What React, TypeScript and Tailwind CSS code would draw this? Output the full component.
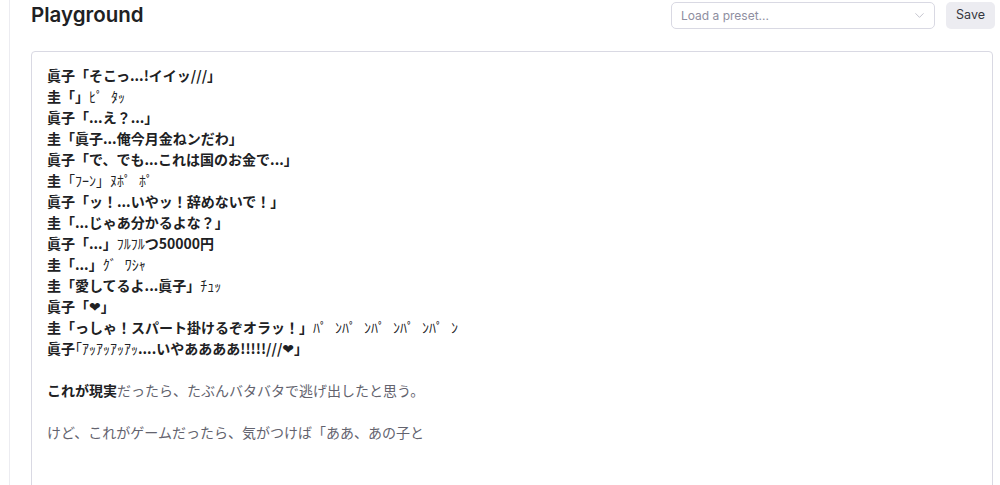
import { ChevronDown } from 'lucide-react'

type Seg = { t: string; thin?: boolean }

const lines: Seg[][] = [
  [{ t: '眞子「そこっ...!イイッ///」' }],
  [{ t: '圭「」' }, { t: 'ﾋﾟﾀｯ', thin: true }],
  [{ t: '眞子「...え？...」' }],
  [{ t: '圭「眞子...俺今月金ねンだわ」' }],
  [{ t: '眞子「で、でも...これは国のお金で...」' }],
  [{ t: '圭' }, { t: '「ﾌｰﾝ」ﾇﾎﾟﾎﾟ', thin: true }],
  [{ t: '眞子「ッ！...いやッ！辞めないで！」' }],
  [{ t: '圭「...じゃあ分かるよな？」' }],
  [{ t: '眞子「...」' }, { t: 'ﾌﾙﾌﾙ', thin: true }, { t: 'つ50000円' }],
  [{ t: '圭「...」' }, { t: 'ｸﾞﾜｼｬ', thin: true }],
  [{ t: '圭「愛してるよ...眞子」' }, { t: 'ﾁｭｯ', thin: true }],
  [{ t: '眞子「❤」' }],
  [{ t: '圭「っしゃ！スパート掛けるぞオラッ！」' }, { t: 'ﾊﾟﾝﾊﾟﾝﾊﾟﾝﾊﾟﾝﾊﾟﾝ', thin: true }],
  [{ t: '眞子' }, { t: '｢ｱｯｱｯｱｯｱｯ', thin: true }, { t: '....いやああああ!!!!!///❤」' }],
]

// half-width kana: a sound mark takes a wide cell in the original font,
// so the kana + mark pair gets some room after it
function Thin({ text }: { text: string }) {
  const parts: string[] = []
  for (const c of Array.from(text)) {
    if ((c === 'ﾟ' || c === 'ﾞ') && parts.length) parts[parts.length - 1] += c
    else parts.push(c)
  }
  return (
    <span className="font-normal">
      {parts.map((p, k) => (
        <span key={k} className={p.length > 1 ? 'pr-[8px]' : ''}>{p}</span>
      ))}
    </span>
  )
}

export default function App() {
  return (
    <div className="h-screen overflow-hidden bg-white pl-[9px] font-['Inter','Noto_Sans_CJK_JP',sans-serif]">
      <div className="h-full border-l border-[#ececf1] pl-[21px] pr-[5px]">
        <div className="flex h-[31px] items-center justify-between">
          <h1 className="text-[20.5px] font-semibold text-[#202123]">Playground</h1>
          <div className="flex items-center gap-[11px]">
            <div className="flex h-[27px] w-[264px] items-center justify-between rounded-[5px] border border-[#d9d9e3] pl-[9px] pr-[7px]">
              <span className="text-[12px] text-[#8e8ea0]">Load a preset...</span>
              <ChevronDown className="h-[15px] w-[15px] text-[#b4b4c0]" strokeWidth={1.25} />
            </div>
            <button className="h-[27px] w-[49px] rounded-[5px] bg-[#ececf1] text-[12.5px] text-[#353740]">Save</button>
          </div>
        </div>

        <div className="mr-[2px] mt-[20px] h-[480px] rounded-[4px] border border-[#d9d9e3] px-[15px] pt-[13px] font-['Noto_Sans_CJK_JP','DejaVu_Sans',sans-serif] text-[14px] leading-[21px]">
          {lines.map((segs, i) => (
            <div key={i} className="font-bold text-[#202123]">
              {segs.map((s, j) => (s.thin ? <Thin key={j} text={s.t} /> : <span key={j}>{s.t}</span>))}
            </div>
          ))}
          <div className="h-[21px]" />
          <div className="text-[#63636e]">
            <span className="font-bold text-[#202123]">これが現実</span>だったら、たぶんバタバタで逃げ出したと思う。
          </div>
          <div className="h-[21px]" />
          <div className="text-[#63636e]">けど、これがゲームだったら、気がつけば「ああ、あの子と</div>
        </div>
      </div>
    </div>
  )
}
